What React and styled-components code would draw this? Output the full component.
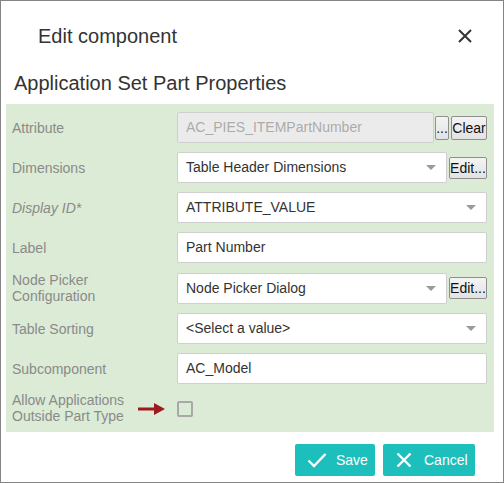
import React from 'react'
import styled, { createGlobalStyle } from 'styled-components'

const Global = createGlobalStyle`
  html, body { margin: 0; padding: 0; background: #fff; }
  body { font-family: "Liberation Sans", Arial, sans-serif; }
  * { box-sizing: border-box; }
`

function App() {
  return (
    <>
      <Global />
      <Dialog>
        <Header>
          <Title>Edit component</Title>
          <Close aria-label="close">
            <svg width="16" height="16" viewBox="0 0 16 16">
              <path d="M2 2 L14 14 M14 2 L2 14" stroke="#333" strokeWidth="2" />
            </svg>
          </Close>
        </Header>
        <Subtitle>Application Set Part Properties</Subtitle>
        <Panel>
          <Row>
            <Label>Attribute</Label>
            <Field>
              <TextBox disabled>AC_PIES_ITEMPartNumber</TextBox>
              <SmallButton $w={14} $mr={1}>...</SmallButton>
              <SmallButton $w={36}>Clear</SmallButton>
            </Field>
          </Row>
          <Row>
            <Label>Dimensions</Label>
            <Field>
              <Select>Table Header Dimensions<Caret /></Select>
              <SmallButton $w={38} $ml={2}>Edit...</SmallButton>
            </Field>
          </Row>
          <Row>
            <Label $italic>Display ID*</Label>
            <Field>
              <Select>ATTRIBUTE_VALUE<Caret /></Select>
            </Field>
          </Row>
          <Row>
            <Label>Label</Label>
            <Field>
              <TextBox>Part Number</TextBox>
            </Field>
          </Row>
          <Row>
            <Label>Node Picker<br />Configuration</Label>
            <Field>
              <Select>Node Picker Dialog<Caret /></Select>
              <SmallButton $w={38} $ml={2}>Edit...</SmallButton>
            </Field>
          </Row>
          <Row>
            <Label>Table Sorting</Label>
            <Field>
              <Select>&lt;Select a value&gt;<Caret /></Select>
            </Field>
          </Row>
          <Row>
            <Label>Subcomponent</Label>
            <Field>
              <TextBox>AC_Model</TextBox>
            </Field>
          </Row>
          <Row $last>
            <Label>Allow Applications<br />Outside Part Type</Label>
            <Field>
              <Arrow width="27" height="12" viewBox="0 0 27 12">
                <path d="M0 4.5 H16 V0 L27 6 L16 12 V7.5 H0 Z" fill="#9b1b1e" />
              </Arrow>
              <Check />
            </Field>
          </Row>
        </Panel>
        <Footer>
          <ActionButton>
            <svg width="20" height="16" viewBox="0 0 20 16">
              <path d="M1.5 8.5 L7 14 L18.5 2" stroke="#fff" strokeWidth="2.4" fill="none" />
            </svg>
            Save
          </ActionButton>
          <ActionButton>
            <svg width="16" height="16" viewBox="0 0 16 16">
              <path d="M1.5 1.5 L14.5 14.5 M14.5 1.5 L1.5 14.5" stroke="#fff" strokeWidth="2.4" />
            </svg>
            Cancel
          </ActionButton>
        </Footer>
      </Dialog>
    </>
  )
}

const Dialog = styled.div`
  width: 504px;
  height: 483px;
  border: 1px solid #858585;
  display: flex;
  flex-direction: column;
  color: #333;
`
const Header = styled.div`
  display: flex;
  align-items: center;
  justify-content: space-between;
  height: 70px;
  padding: 0 30px 0 37px;
`
const Title = styled.div`
  font-size: 20px;
`
const Close = styled.div`
  display: flex;
  width: 16px;
  height: 16px;
`
const Subtitle = styled.div`
  font-size: 20px;
  padding-left: 13px;
  line-height: 24px;
`
const Panel = styled.div`
  margin: 9px 9px 0 5px;
  background: #dcebd6;
  padding: 8px 7px 8px 6px;
  display: flex;
  flex-direction: column;
  gap: 9px;
`
const Row = styled.div`
  display: flex;
  align-items: center;
  min-height: 31px;
  margin-top: ${p => (p.$last ? '-1px' : '0')};
`
const Label = styled.div`
  width: 165px;
  flex-shrink: 0;
  font-size: 14px;
  line-height: 16px;
  color: #8a8a8a;
  font-style: ${p => (p.$italic ? 'italic' : 'normal')};
`
const Field = styled.div`
  flex: 1;
  display: flex;
  align-items: center;
  position: relative;
`
const TextBox = styled.div`
  flex: 1;
  height: 31px;
  border: 1px solid #cfcfcf;
  border-radius: 2px;
  background: ${p => (p.disabled ? '#ebebeb' : '#fff')};
  color: ${p => (p.disabled ? '#ababab' : '#333')};
  font-size: 14px;
  line-height: 29px;
  padding-left: 8px;
`
const Select = styled(TextBox)`
  display: flex;
  align-items: center;
  justify-content: space-between;
  padding-right: 10px;
`
const Caret = styled.span`
  width: 0;
  height: 0;
  border-left: 5px solid transparent;
  border-right: 5px solid transparent;
  border-top: 5px solid #9a9a9a;
`
const SmallButton = styled.div`
  width: ${p => p.$w}px;
  height: ${p => (p.$w > 20 && p.$ml ? 22 : 24)}px;
  margin-left: ${p => p.$ml || 1}px;
  margin-right: ${p => p.$mr || 0}px;
  border: 1px solid #8f8f8f;
  border-radius: 2px;
  background: linear-gradient(#f4f4f4, #e2e2e2);
  color: #111;
  font-size: 14px;
  display: flex;
  align-items: center;
  justify-content: center;
  flex-shrink: 0;
`
const Arrow = styled.svg`
  position: absolute;
  left: -39px;
  top: 50%;
  margin-top: -5px;
`
const Check = styled.div`
  width: 16px;
  height: 16px;
  border: 2px solid #a8a8a8;
  border-radius: 2px;
  margin-top: 2px;
`
const Footer = styled.div`
  display: flex;
  justify-content: flex-end;
  gap: 8px;
  padding: 12px 28px 0 0;
`
const ActionButton = styled.div`
  display: flex;
  align-items: center;
  gap: 9px;
  height: 32px;
  padding: 0 8px 0 12px;
  background: #1dbfbd;
  border-radius: 2px;
  color: #fff;
  font-size: 14px;
  svg { flex-shrink: 0; }
  &:first-child { width: 80px; }
  &:last-child { width: 92px; padding-left: 13px; gap: 12px; }
`

export default App
